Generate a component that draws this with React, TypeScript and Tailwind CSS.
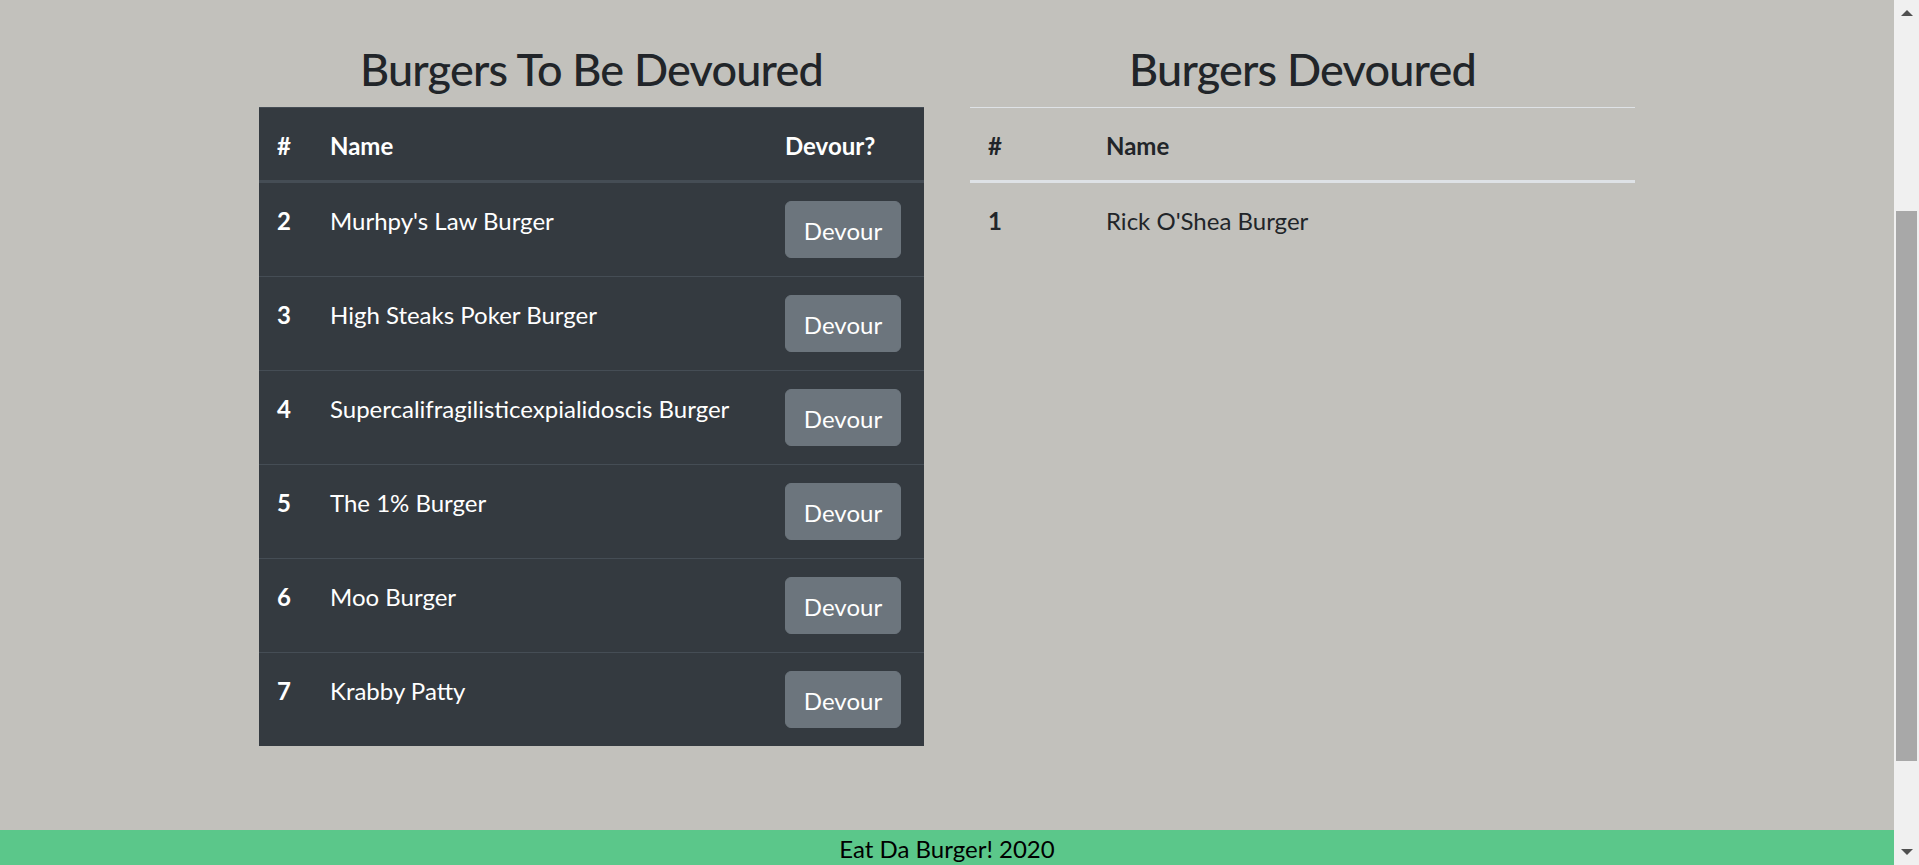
import React from "react";

type Burger = { id: number; name: string };

const toEat: Burger[] = [
  { id: 2, name: "Murhpy's Law Burger" },
  { id: 3, name: "High Steaks Poker Burger" },
  { id: 4, name: "Supercalifragilisticexpialidoscis Burger" },
  { id: 5, name: "The 1% Burger" },
  { id: 6, name: "Moo Burger" },
  { id: 7, name: "Krabby Patty" },
];

const eaten: Burger[] = [{ id: 1, name: "Rick O'Shea Burger" }];

function ScrollBar() {
  return (
    <div className="flex w-[25px] shrink-0 flex-col bg-[#f0f0f0]">
      <div className="flex h-[25px] items-center justify-center">
        <svg width="12" height="7" viewBox="0 0 12 7">
          <path d="M0 7 L6 1 L12 7 Z" fill="#505050" />
        </svg>
      </div>
      <div className="mx-[2px] mt-[186px] h-[550px] bg-[#a8a8a8]" />
      <div className="flex-1" />
      <div className="flex h-[25px] items-center justify-center">
        <svg width="12" height="7" viewBox="0 0 12 7">
          <path d="M0 0 L6 6 L12 0 Z" fill="#505050" />
        </svg>
      </div>
    </div>
  );
}

function ToEatTable() {
  return (
    <section className="w-[665px]">
      <h2 className="mb-[8px] pt-[4px] text-center text-[45px] leading-[57.6px] font-medium tracking-[-0.8px] text-[#212529]">
        Burgers To Be Devoured
      </h2>
      <table className="w-full table-fixed border-collapse bg-[#343a40] text-[24px] leading-[36px] text-white">
        <colgroup>
          <col className="w-[53px]" />
          <col />
          <col className="w-[157px]" />
        </colgroup>
        <thead>
          <tr>
            <th className="border-t border-b-[3px] border-[#454d55] px-[18px] pt-[20px] pb-[16px] text-left font-bold">#</th>
            <th className="border-t border-b-[3px] border-[#454d55] px-[18px] pt-[20px] pb-[16px] text-left font-bold">Name</th>
            <th className="border-t border-b-[3px] border-[#454d55] px-[18px] pt-[20px] pb-[16px] text-left font-bold">Devour?</th>
          </tr>
        </thead>
        <tbody>
          {toEat.map((b) => (
            <tr key={b.id}>
              <td className="border-t border-[#454d55] px-[18px] pt-[20px] pb-[16px] align-top font-bold">{b.id}</td>
              <td className="border-t border-[#454d55] px-[18px] pt-[20px] pb-[16px] align-top whitespace-nowrap">{b.name}</td>
              <td className="border-t border-[#454d55] p-[18px] align-top">
                <button className="h-[57px] w-[116px] rounded-[6px] border border-[#6c757d] bg-[#6c757d] pt-[4px] text-center text-[24px] leading-[36px] text-white">
                  Devour
                </button>
              </td>
            </tr>
          ))}
        </tbody>
      </table>
    </section>
  );
}

function EatenTable() {
  return (
    <section className="w-[665px]">
      <h2 className="mb-[8px] pt-[4px] text-center text-[45px] leading-[57.6px] font-medium tracking-[-0.8px] text-[#212529]">
        Burgers Devoured
      </h2>
      <table className="w-full table-fixed border-collapse text-[24px] leading-[36px] text-[#212529]">
        <colgroup>
          <col className="w-[118px]" />
          <col />
        </colgroup>
        <thead>
          <tr>
            <th className="border-t border-b-[3px] border-[#dee2e6] px-[18px] pt-[20px] pb-[16px] text-left font-bold">#</th>
            <th className="border-t border-b-[3px] border-[#dee2e6] px-[18px] pt-[20px] pb-[16px] text-left font-bold">Name</th>
          </tr>
        </thead>
        <tbody>
          {eaten.map((b) => (
            <tr key={b.id}>
              <td className="px-[18px] pt-[20px] pb-[16px] align-top font-bold">{b.id}</td>
              <td className="px-[18px] pt-[20px] pb-[16px] align-top">{b.name}</td>
            </tr>
          ))}
        </tbody>
      </table>
    </section>
  );
}

export default function App() {
  return (
    <div className="flex h-[865px] overflow-hidden bg-[#c2c1bc] font-['Lato',sans-serif]">
      <div className="flex min-w-0 flex-1 flex-col">
        <main className="flex flex-1 items-start justify-center gap-[46px] pt-[37px]">
          <ToEatTable />
          <EatenTable />
        </main>
        <footer className="h-[35px] bg-[#5bc78a] pt-[1px] text-center text-[24px] leading-[36px] text-black">
          Eat Da Burger! 2020
        </footer>
      </div>
      <ScrollBar />
    </div>
  );
}
